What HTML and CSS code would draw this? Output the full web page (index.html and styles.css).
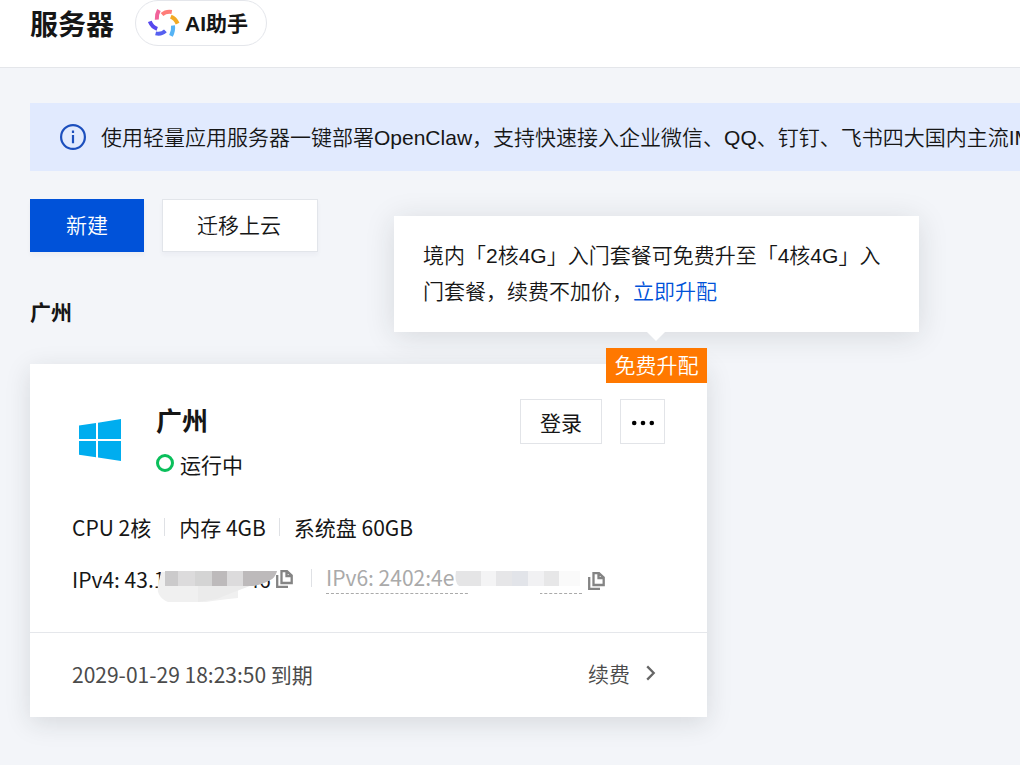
FILE: index.html
```
<!DOCTYPE html>
<html lang="zh-CN">
<head>
<meta charset="utf-8">
<title>服务器</title>
<link rel="stylesheet" href="styles.css">
</head>
<body>
<header class="header">
  <h1 class="title">服务器</h1>
  <button class="assistant">
    <svg class="assistant-icon" width="32" height="28" viewBox="0 0 32 28" fill="none" stroke-width="4">
      <path d="M8.8 10.6Q8.4 5.5 10.9 1" stroke="#f1629a"/>
      <path d="M14 5.6Q18 2 23.8 3" stroke="#ff7d79"/>
      <path d="M22.8 7.6Q27.4 9.4 29.6 14.6" stroke="#f2aa24"/>
      <path d="M25 16.4Q25.7 21.5 23 26.8" stroke="#55b3f5"/>
      <path d="M17.4 21.9Q13.4 25.8 7.6 24.4" stroke="#5660f0"/>
      <path d="M9.2 19.8Q4 18 1.8 12.4" stroke="#5748ee"/>
    </svg>
    <span class="assistant-label">AI助手</span>
  </button>
</header>
<main class="main">
  <div class="banner">
    <svg width="26" height="26" viewBox="0 0 26 26" fill="none" stroke="#1c4fbd">
      <circle cx="13" cy="13" r="11.9" stroke-width="2.2"/>
      <path d="M13 11v8.3M13 6.4v2.6" stroke-width="2.2"/>
    </svg>
    <span class="banner-text">使用轻量应用服务器一键部署OpenClaw，支持快速接入企业微信、QQ、钉钉、飞书四大国内主流IM</span>
  </div>
  <div class="actions">
    <button class="btn btn-primary">新建</button>
    <button class="btn btn-default">迁移上云</button>
  </div>
  <h2 class="region">广州</h2>
  <section class="card">
    <div class="popover">境内「2核4G」入门套餐可免费升至「4核4G」入<br>门套餐，续费不加价，<a class="upgrade">立即升配</a></div>
    <span class="tag">免费升配</span>
    <div class="card-body">
      <div class="summary">
        <svg class="os" width="42" height="42" viewBox="0 0 42 42" fill="#00adef">
          <path d="M0 6.4 17 4V20H0zM19 3.7 42 0V20H19zM0 22H17V38.2L0 35.8zM19 22H42V42L19 38.6z"/>
        </svg>
        <div class="identity">
          <h3 class="name">广州</h3>
          <div class="status"><i class="status-ring"></i>运行中</div>
        </div>
        <button class="small-btn login">登录</button>
        <button class="small-btn more"><svg width="24" height="6" viewBox="0 0 24 6"><circle cx="3.2" cy="3" r="2.3"/><circle cx="12" cy="3" r="2.3"/><circle cx="20.8" cy="3" r="2.3"/></svg></button>
      </div>
      <div class="specs"><span>CPU 2核</span><i class="divider"></i><span>内存 4GB</span><i class="divider"></i><span>系统盘 60GB</span></div>
      <div class="network">
        <span class="ipv4">IPv4: 43.1<span class="tail">46</span>
          <svg class="mask-v4" width="122" height="34" viewBox="0 0 122 34">
            <path d="M5 2H82V28Q62 30 50 32H12Q0 27 2 15Z" fill="#f0f0f0"/>
            <path d="M42 16H94Q75 23 61 29L42 32Z" fill="#ebebeb"/>
            <path d="M9 1H121Q119 7 116 9Q108 14 96 16H9Z" fill="#dcdbdc"/>
            <path d="M9 1H22V16H9Z" fill="#cbcacb"/><path d="M39 1H56V16H39Z" fill="#d4d4d4"/>
            <path d="M56 1H71V16H56Z" fill="#bdbabb"/><path d="M87 1H121Q119 7 116 9Q108 14 96 16H87Z" fill="#bdbabb"/>
          </svg>
        </span>
        <svg class="copy copy-v4" width="17" height="18" viewBox="0 0 17 18" fill="none" stroke="#848484" stroke-width="2.3"><path d="M5.5 1.2H11L15.7 5.5V13H5.5ZM10.5 1V6H15.5M1.2 5V16.8H12"/></svg>
        <i class="divider net-divider"></i>
        <span class="ipv6">IPv6: 2402:4e
          <svg class="mask-v6" width="127" height="27" viewBox="0 0 127 27">
            <path d="M14 17H86V27H14Z" fill="#fff"/>
            <path d="M2 1H27V16H5Q0 12 2 1Z" fill="#e5e5e6"/><path d="M27 1H42V16H27Z" fill="#f4f4f5"/>
            <path d="M42 1H58V16H42Z" fill="#e6e6e8"/><path d="M58 1H74V16H58Z" fill="#e2e4e9"/>
            <path d="M74 1H90V16H74Z" fill="#f1f1f3"/><path d="M90 1H105V16H90Z" fill="#e7e7e8"/>
            <path d="M105 1H126V16H105Z" fill="#fafafa"/>
          </svg>
        </span>
        <svg class="copy copy-v6" width="17" height="18" viewBox="0 0 17 18" fill="none" stroke="#848484" stroke-width="2.3"><path d="M5.5 1.2H11L15.7 5.5V13H5.5ZM10.5 1V6H15.5M1.2 5V16.8H12"/></svg>
      </div>
    </div>
    <footer class="card-footer">
      <span>2029-01-29 18:23:50 到期</span>
      <a class="renew">续费<svg width="10" height="16" viewBox="0 0 10 16" fill="none" stroke="#666" stroke-width="2.3"><path d="m1.2 1.4 6.5 6.6-6.5 6.6"/></svg></a>
    </footer>
  </section>
</main>
</body>
</html>
```
FILE: styles.css
```
* { box-sizing: border-box; }
body {
  margin: 0;
  height: 765px;
  overflow: hidden;
  background: #f3f5f9;
  color: #161616;
  font: 21px/30px "Liberation Sans", "Noto Sans CJK SC", sans-serif;
}
h1, h2, h3 { margin: 0; }
button { font: inherit; color: inherit; padding: 0; }
svg { display: block; flex: none; }
.header {
  display: flex;
  align-items: flex-start;
  gap: 21px;
  height: 68px;
  padding-left: 30px;
  background: #fff;
  border-bottom: 1px solid #e4e6ea;
}
.title { font-size: 28px; line-height: 51px; width: 84px; white-space: nowrap; }
.assistant {
  display: flex;
  align-items: center;
  gap: 5px;
  width: 132px;
  height: 46px;
  padding-left: 12px;
  background: #fff;
  border: 1px solid #e4e6eb;
  border-radius: 23px;
  font-weight: 700;
  white-space: nowrap;
}
.assistant-label { padding-top: 2px; }
.main { padding: 35px 0 0 30px; }
.banner {
  display: flex;
  align-items: center;
  gap: 15px;
  height: 68px;
  padding-left: 30px;
  background: #e1eafe;
  white-space: nowrap;
  font-weight: 350;
  overflow: hidden;
}
.banner-text { padding-top: 2px; }
.actions { display: flex; gap: 18px; margin-top: 28px; }
.btn { height: 53px; font-weight: 350; box-shadow: 0 3px 4px rgba(40, 60, 100, .04); }
.btn-primary { width: 114px; color: #fff; background: #0052d9; border: 0; }
.btn-default { width: 156px; padding-right: 2px; background: #fff; border: 1px solid #e2e5ea; }
.region { margin-top: 46px; font-size: 21px; line-height: 30px; }
.card {
  position: relative;
  width: 677px;
  height: 353px;
  margin-top: 36px;
  background: #fff;
  box-shadow: 0 6px 24px rgba(30, 35, 40, .13);
  font-family: "Noto Sans CJK SC", sans-serif;
}
.popover {
  position: absolute;
  left: 364px;
  top: -148px;
  width: 525px;
  height: 116px;
  padding: 22px 0 0 29px;
  background: #fff;
  box-shadow: 0 4px 28px rgba(30, 35, 40, .13);
  font: 350 21px/36px "Liberation Sans", "Noto Sans CJK SC", sans-serif;
  white-space: nowrap;
}
.popover::after {
  content: "";
  position: absolute;
  left: 253px;
  top: 116px;
  border: 9px solid transparent;
  border-top-color: #fff;
  border-bottom: 0;
}
.upgrade { color: #0052d9; }
.tag {
  position: absolute;
  right: 0;
  top: -16px;
  width: 101px;
  height: 35px;
  background: #ff7800;
  color: #fff;
  font-weight: 350;
  line-height: 33px;
  text-align: center;
}
.card-body { height: 268px; padding: 35px 42px 0; }
.summary { display: flex; align-items: flex-start; height: 112px; }
.os { margin: 20px 0 0 7px; }
.identity { width: 364px; padding-left: 35px; }
.name { font-size: 26px; line-height: 42px; }
.status { display: flex; align-items: center; gap: 6px; margin-top: 8px; }
.status-ring { width: 18px; height: 18px; border: 3px solid #0abf5b; border-radius: 50%; margin-top: -2px; }
.small-btn { display: flex; align-items: center; justify-content: center; height: 45px; background: #fff; border: 1px solid #e2e4e8; }
.login { width: 82px; margin-left: 35px; }
.more { width: 45px; margin-left: 18px; padding-top: 2px; }
.specs { display: flex; align-items: center; height: 32px; white-space: nowrap; }
.divider { width: 1px; height: 18px; margin: 0 14px 0 13px; background: #dfe1e5; }
.network { display: flex; align-items: flex-start; margin-top: 20px; white-space: nowrap; }
.ipv4 { position: relative; width: 204px; line-height: 32px; }
.tail { padding-left: 82px; }
.mask-v4 { position: absolute; left: 84px; top: 7px; }
.copy { margin-top: 7px; }
.net-divider { margin: 6px 14px 0 18px; }
.ipv6 { position: relative; width: 256px; height: 31px; line-height: 28px; color: #aaa; font-weight: 400; border-bottom: 1px dashed #aaa; }
.mask-v6 { position: absolute; left: 128px; top: 7px; }
.copy-v6 { margin: 9px 0 0 6px; }
.card-footer {
  display: flex;
  align-items: center;
  justify-content: space-between;
  height: 85px;
  padding: 0 51px 2px 42px;
  border-top: 1px solid #e5e7eb;
  color: #4b4b4b;
}
.renew { display: flex; align-items: center; gap: 16px; padding-bottom: 2px; font-weight: 350; }
```
